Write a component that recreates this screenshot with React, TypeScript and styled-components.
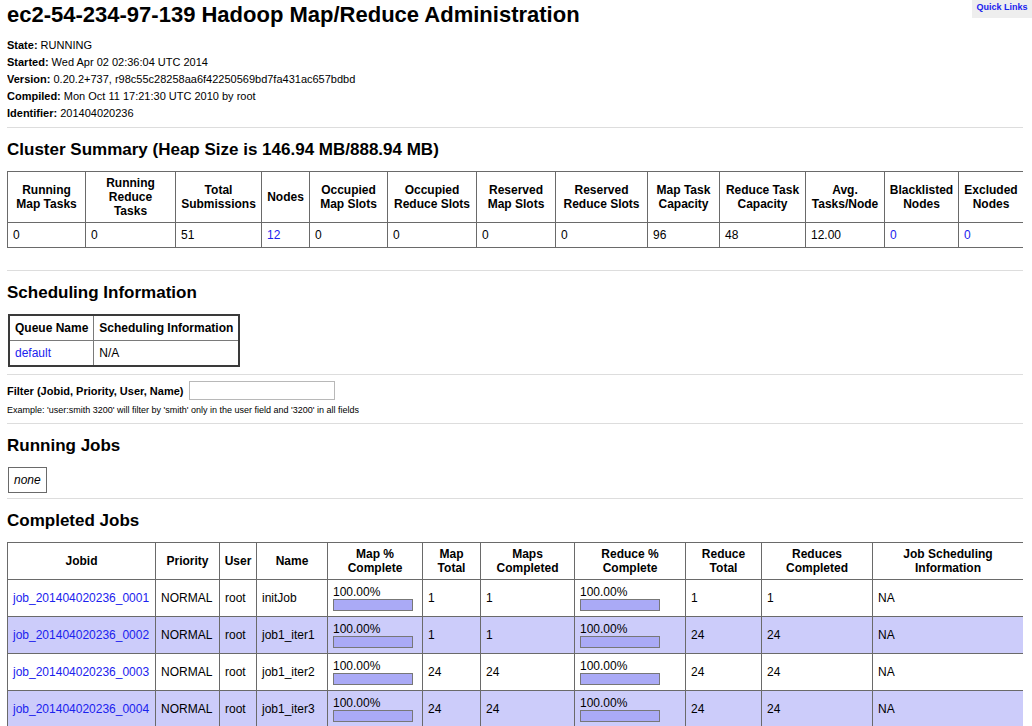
import React from "react";
import styled, { createGlobalStyle } from "styled-components";

const GlobalStyle = createGlobalStyle`
    html {
        scrollbar-width: none;
    }
    html::-webkit-scrollbar {
        display: none;
    }
    body {
        margin: 0 9px 0 7px;
        background: #ffffff;
        color: #000000;
        font-family: "Liberation Sans", Arial, Helvetica, sans-serif;
        font-size: 12px;
    }
    a {
        color: #1a22ee;
        text-decoration: none;
    }
`

const QuickLinks = styled.div`
    position: absolute;
    top: 0;
    right: 0;
    width: 60px;
    height: 18px;
    background: #eeeeee;
    font-size: 9px;
    font-weight: bold;
    line-height: 15px;
    text-align: center;
`

const Title = styled.h1`
    margin: 3px 0 0;
    font-size: 22px;
    line-height: 24px;
    font-weight: bold;
`

const Info = styled.div`
    margin-top: 10px;
    font-size: 11px;
    line-height: 17px;
`

const Rule = styled.div<{ $gap: number }>`
    margin-top: ${props => props.$gap}px;
    border-top: 1px solid #dddddd;
`

const Heading = styled.h2`
    margin: 12px 0 11px;
    font-size: 17px;
    line-height: 20px;
    font-weight: bold;
`

const DataTable = styled.table`
    width: 100%;
    table-layout: fixed;
    border-collapse: collapse;
    border: 1px solid #6a6a6a;
`

const HeadCell = styled.th<{ $w?: number }>`
    box-sizing: border-box;
    width: ${props => props.$w ? `${props.$w}px` : "auto"};
    border: 1px solid #6a6a6a;
    padding: 4px 2px;
    font-size: 12px;
    line-height: 14px;
    font-weight: bold;
    text-align: center;
    vertical-align: middle;
    white-space: nowrap;
`

const Cell = styled.td`
    border: 1px solid #6a6a6a;
    padding: 5px;
    font-size: 12px;
    line-height: 14px;
    text-align: left;
    vertical-align: middle;
    white-space: nowrap;
`

const JobRow = styled.tr<{ $alt: boolean }>`
    background: ${props => props.$alt ? "#ccccfa" : "#ffffff"};
`

const QueueTable = styled.table`
    border-collapse: collapse;
    border: 2px solid #3a3a3a;
    margin-left: 1px;
`

const QueueCell = styled.td<{ $head?: boolean }>`
    border: 1px solid #7a7a7a;
    padding: 5px 5px;
    font-size: 12px;
    line-height: 14px;
    font-weight: ${props => props.$head ? "bold" : "normal"};
`

const FilterRow = styled.div`
    display: flex;
    align-items: center;
    gap: 6px;
    margin-top: 6px;
    font-size: 11px;
    font-weight: bold;
`

const FilterInput = styled.input`
    box-sizing: border-box;
    width: 146px;
    height: 19px;
    margin: 0;
    border: 1px solid #b8b8b8;
    padding: 1px 3px;
    font-size: 11px;
    font-family: inherit;
`

const Hint = styled.div`
    margin-top: 5px;
    font-size: 9px;
    line-height: 10px;
`

const NoneBox = styled.div`
    display: inline-block;
    margin-left: 1px;
    border: 1px solid #6a6a6a;
    padding: 5px;
    font-size: 12px;
    line-height: 14px;
    font-style: italic;
`

const Progress = styled.div`
    display: flex;
    flex-direction: column;
`

const Bar = styled.div`
    box-sizing: border-box;
    width: 80px;
    height: 12px;
    border: 1px solid #777777;
    background: #aaaaf6;
`

// header labels: "|" marks where the original page wraps the text
const clusterCols: [string, number][] = [
  ["Running|Map Tasks", 78],
  ["Running|Reduce|Tasks", 90],
  ["Total|Submissions", 86],
  ["Nodes", 48],
  ["Occupied|Map Slots", 78],
  ["Occupied|Reduce Slots", 89],
  ["Reserved|Map Slots", 79],
  ["Reserved|Reduce Slots", 92],
  ["Map Task|Capacity", 72],
  ["Reduce Task|Capacity", 86],
  ["Avg.|Tasks/Node", 79],
  ["Blacklisted|Nodes", 74],
  ["Excluded|Nodes", 65],
]

const clusterValues: { v: string, link?: boolean }[] = [
  { v: "0" }, { v: "0" }, { v: "51" }, { v: "12", link: true }, { v: "0" }, { v: "0" },
  { v: "0" }, { v: "0" }, { v: "96" }, { v: "48" }, { v: "12.00" },
  { v: "0", link: true }, { v: "0", link: true },
]

const jobCols: [string, number][] = [
  ["Jobid", 148],
  ["Priority", 64],
  ["User", 37],
  ["Name", 71],
  ["Map %|Complete", 95],
  ["Map|Total", 58],
  ["Maps|Completed", 94],
  ["Reduce %|Complete", 111],
  ["Reduce|Total", 76],
  ["Reduces|Completed", 111],
  ["Job Scheduling|Information", 151],
]

const jobs = [
  { id: "job_201404020236_0001", name: "initJob", maps: 1, reduces: 1 },
  { id: "job_201404020236_0002", name: "job1_iter1", maps: 1, reduces: 24 },
  { id: "job_201404020236_0003", name: "job1_iter2", maps: 24, reduces: 24 },
  { id: "job_201404020236_0004", name: "job1_iter3", maps: 24, reduces: 24 },
]

const HeaderRow = (props: { cols: [string, number][] }) => (
  <tr>
    {props.cols.map(([label, w]) => (
      <HeadCell key={label} $w={w}>
        {label.split("|").map((line, i) => (
          <React.Fragment key={i}>
            {i > 0 && <br />}
            {line}
          </React.Fragment>
        ))}
      </HeadCell>
    ))}
  </tr>
)

const ProgressCell = (props: { pct: string }) => (
  <Cell>
    <Progress>
      <span>{props.pct}</span>
      <Bar />
    </Progress>
  </Cell>
)

export default function App() {
  return (
    <>
      <GlobalStyle />
      <QuickLinks><a href="#">Quick Links</a></QuickLinks>

      <Title>ec2-54-234-97-139 Hadoop Map/Reduce Administration</Title>
      <Info>
        <div><b>State:</b> RUNNING</div>
        <div><b>Started:</b> Wed Apr 02 02:36:04 UTC 2014</div>
        <div><b>Version:</b> 0.20.2+737, r98c55c28258aa6f42250569bd7fa431ac657bdbd</div>
        <div><b>Compiled:</b> Mon Oct 11 17:21:30 UTC 2010 by root</div>
        <div><b>Identifier:</b> 201404020236</div>
      </Info>
      <Rule $gap={5} />

      <Heading>Cluster Summary (Heap Size is 146.94 MB/888.94 MB)</Heading>
      <DataTable>
        <tbody>
          <HeaderRow cols={clusterCols} />
          <tr>
            {clusterValues.map((c, i) => (
              <Cell key={i}>{c.link ? <a href="#">{c.v}</a> : c.v}</Cell>
            ))}
          </tr>
        </tbody>
      </DataTable>
      <Rule $gap={22} />

      <Heading>Scheduling Information</Heading>
      <QueueTable>
        <tbody>
          <tr>
            <QueueCell $head>Queue Name</QueueCell>
            <QueueCell $head>Scheduling Information</QueueCell>
          </tr>
          <tr>
            <QueueCell><a href="#">default</a></QueueCell>
            <QueueCell>N/A</QueueCell>
          </tr>
        </tbody>
      </QueueTable>
      <Rule $gap={7} />

      <FilterRow>
        <span>Filter (Jobid, Priority, User, Name)</span>
        <FilterInput type="text" />
      </FilterRow>
      <Hint>Example: 'user:smith 3200' will filter by 'smith' only in the user field and '3200' in all fields</Hint>
      <Rule $gap={8} />

      <Heading>Running Jobs</Heading>
      <NoneBox>none</NoneBox>
      <Rule $gap={5} />

      <Heading>Completed Jobs</Heading>
      <DataTable>
        <tbody>
          <HeaderRow cols={jobCols} />
          {jobs.map((job, i) => (
            <JobRow key={job.id} $alt={i % 2 === 1}>
              <Cell><a href="#">{job.id}</a></Cell>
              <Cell>NORMAL</Cell>
              <Cell>root</Cell>
              <Cell>{job.name}</Cell>
              <ProgressCell pct="100.00%" />
              <Cell>{job.maps}</Cell>
              <Cell>{job.maps}</Cell>
              <ProgressCell pct="100.00%" />
              <Cell>{job.reduces}</Cell>
              <Cell>{job.reduces}</Cell>
              <Cell>NA</Cell>
            </JobRow>
          ))}
        </tbody>
      </DataTable>
    </>
  );
}
